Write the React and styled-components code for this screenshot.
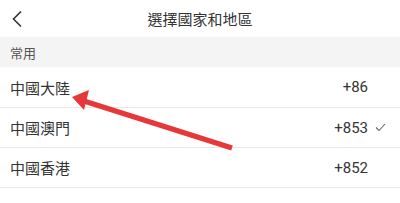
import React from "react";
import styled, { createGlobalStyle } from "styled-components";

const Global = createGlobalStyle`
  html, body { margin: 0; padding: 0; background: #fff; }
  body { font-family: "Noto Sans CJK TC", "Noto Sans", Roboto, sans-serif; }
`;

const Page = styled.div`
  position: relative;
  width: 400px;
  height: 203px;
  overflow: hidden;
  background: #fff;
`;

const Header = styled.div`
  height: 37px;
  display: grid;
  grid-template-columns: 40px 1fr 40px;
  align-items: center;
`;

const Back = styled.button`
  border: 0;
  background: none;
  padding: 0 0 0 11px;
  height: 37px;
  display: flex;
  align-items: center;
`;

const Title = styled.div`
  text-align: center;
  font-size: 15px;
  color: #333;
  line-height: 37px;
`;

const Section = styled.div`
  height: 30px;
  background: #f4f4f4;
  display: flex;
  align-items: center;
  padding-left: 10px;
  font-size: 13px;
  color: #555;
`;

const Row = styled.div`
  height: ${(p) => p.$h}px;
  box-sizing: border-box;
  border-bottom: 1px solid #e9e9e9;
  display: flex;
  align-items: center;
  padding: 0 14px 0 10px;
  font-size: 15px;
  color: #333;
`;

const Name = styled.div`
  flex: 1;
`;

const Code = styled.div`
  font-family: Roboto, "Noto Sans", sans-serif;
  font-size: 15px;
  color: #333;
`;

const Check = styled.div`
  width: 18px;
  display: flex;
  justify-content: flex-end;
  margin-left: 0px;
`;

const Overlay = styled.svg`
  position: absolute;
  left: 0;
  top: 0;
  pointer-events: none;
`;

const rows = [
  { name: "中國大陸", code: "+86", h: 41 },
  { name: "中國澳門", code: "+853", h: 40, checked: true },
  { name: "中國香港", code: "+852", h: 40 },
];

export default function App() {
  return (
    <Page>
      <Global />
      <Header>
        <Back aria-label="back">
          <svg width="12" height="18" viewBox="0 0 12 18">
            <path d="M10 1.5 L2.5 9 L10 16.5" fill="none" stroke="#333" strokeWidth="1.6" />
          </svg>
        </Back>
        <Title>選擇國家和地區</Title>
        <div />
      </Header>
      <Section>常用</Section>
      {rows.map((r) => (
        <Row key={r.name} $h={r.h}>
          <Name>{r.name}</Name>
          <Code>{r.code}</Code>
          <Check>
            {r.checked && (
              <svg width="11" height="9" viewBox="0 0 11 9">
                <path d="M1 4.5 L4 7.5 L10 1" fill="none" stroke="#666" strokeWidth="1.1" />
              </svg>
            )}
          </Check>
        </Row>
      ))}
      <Overlay width="400" height="203" viewBox="0 0 400 203">
        <line x1="232" y1="148" x2="84" y2="101" stroke="#e53838" strokeWidth="5.5" />
        <polygon points="72,97 89,90 84,110" fill="#e53838" />
      </Overlay>
    </Page>
  );
}
